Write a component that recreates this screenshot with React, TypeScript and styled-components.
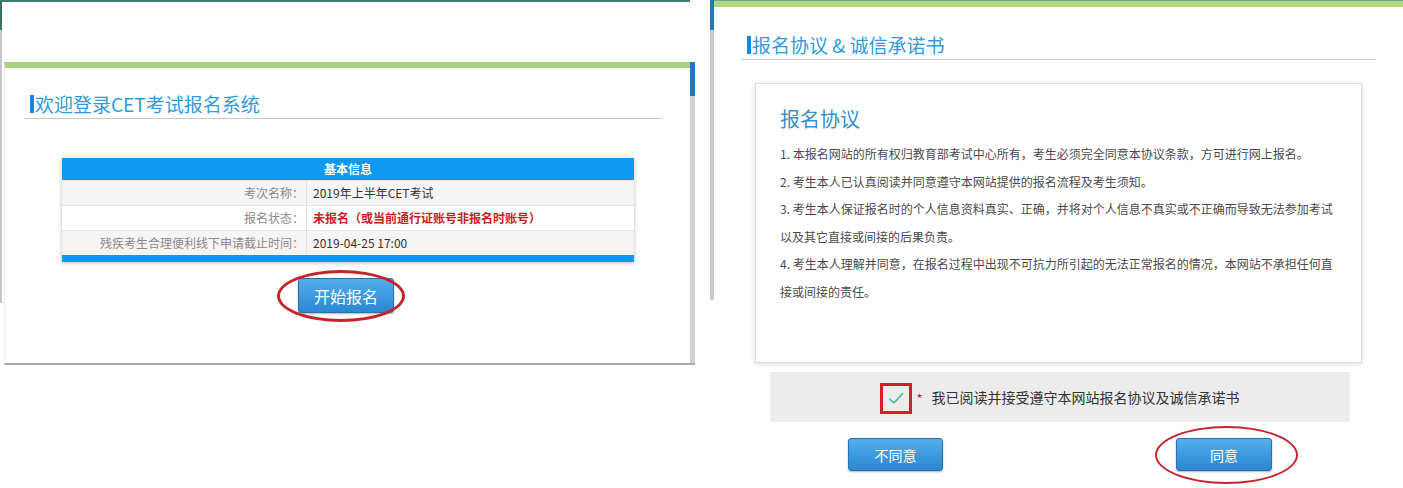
import React from "react";
import styled, { createGlobalStyle } from "styled-components";

const GlobalStyle = createGlobalStyle`
  html, body {
    margin: 0;
    padding: 0;
    background: #fff;
  }
  body {
    font-family: "Noto Sans CJK SC", "Noto Sans", "Liberation Sans", sans-serif;
    color: #333;
  }
`;

const Page = styled.div`
  display: flex;
  align-items: flex-start;
  width: 1403px;
  height: 488px;
  overflow: hidden;
`;

/* ---------- left screenshot ---------- */
const LeftShot = styled.div`
  width: 695px;
  height: 365px;
  display: flex;
  flex-direction: column;
  background: linear-gradient(to bottom, #3f6f68 0 30px, #c6c6c6 30px 303px, transparent 303px)
    left top / 2px 100% no-repeat;
`;

const TopStrip = styled.div`
  height: 60px;
  margin-right: 5px;
  border-top: 2px solid #3f7d70;
`;

const Window = styled.div`
  margin-left: 4px;
  height: 295px;
  display: flex;
  border-top: 6px solid #a8d27c;
  border-bottom: 2px solid #a9a9a9;
  border-left: 1px solid #ececec;
`;

const WindowBody = styled.div`
  flex: 1;
  padding: 0 28px 0 19px;
  display: flex;
  flex-direction: column;
`;

const Scrollbar = styled.div`
  width: 5px;
  margin-top: -6px;
  background: linear-gradient(to bottom, #1f78c0 0 34px, #cfd3d6 34px);
`;

const SectionTitle = styled.h2<{ $top: number }>`
  margin: ${(p) => p.$top}px 0 0;
  padding: 0 0 1px 6px;
  font-size: 19px;
  line-height: 26px;
  font-weight: 400;
  color: #2f9bdc;
  border-bottom: 1px solid #c9c9c9;
  display: flex;
  align-items: center;
  white-space: pre;
  &::before {
    content: "";
    width: 4px;
    height: 18px;
    margin-right: 1px;
    background: #1687e0;
  }
`;

const InfoCard = styled.div`
  width: 572px;
  margin: 39px 0 0 38px;
  box-shadow: 0 1px 4px rgba(0, 0, 0, 0.28);
  font-size: 12px;
`;

const CardHead = styled.div`
  height: 22px;
  line-height: 22px;
  text-align: center;
  color: #fff;
  font-weight: 700;
  background: #0f98ef;
`;

const CardFoot = styled.div`
  height: 7px;
  background: #0f98ef;
`;

const InfoRow = styled.div<{ $shade: boolean }>`
  display: grid;
  grid-template-columns: 245px 1fr;
  height: 24px;
  line-height: 24px;
  background: ${(p) => (p.$shade ? "#f5f5f5" : "#fff")};
  border-top: 1px solid #e3e3e3;
`;

const Label = styled.div`
  text-align: right;
  padding-right: 2px;
  color: #8a8a8a;
  border-right: 1px solid #e3e3e3;
`;

const Value = styled.div<{ $alert?: boolean }>`
  padding-left: 6px;
  color: ${(p) => (p.$alert ? "#d11a1a" : "#333")};
  font-weight: ${(p) => (p.$alert ? 700 : 400)};
`;

const ButtonRow = styled.div<{ $top: number; $left?: number; $right?: number; $spread?: boolean }>`
  display: flex;
  justify-content: ${(p) => (p.$spread ? "space-between" : "center")};
  margin-top: ${(p) => p.$top}px;
  padding: 0 ${(p) => p.$right ?? 0}px 0 ${(p) => p.$left ?? 0}px;
`;

const Marked = styled.span`
  position: relative;
  display: inline-flex;
`;

const Ellipse = styled.span<{ $t: number; $r: number; $b: number; $l: number; $w: number }>`
  position: absolute;
  top: ${(p) => -p.$t}px;
  right: ${(p) => -p.$r}px;
  bottom: ${(p) => -p.$b}px;
  left: ${(p) => -p.$l}px;
  border: ${(p) => p.$w}px solid #c3252d;
  border-radius: 50%;
  pointer-events: none;
`;

const BlueButton = styled.button<{ $w: number; $h: number; $fs: number }>`
  width: ${(p) => p.$w}px;
  height: ${(p) => p.$h}px;
  padding: 0;
  font-family: inherit;
  font-size: ${(p) => p.$fs}px;
  color: #fff;
  background: linear-gradient(to bottom, #52aee9, #2b87d2);
  border: 1px solid #2a6fae;
  border-radius: 3px;
  box-shadow: 0 1px 2px rgba(0, 0, 0, 0.3);
  cursor: pointer;
`;

/* ---------- right screenshot ---------- */
const RightShot = styled.div`
  margin-left: 15px;
  width: 693px;
  height: 488px;
  padding-left: 4px;
  box-sizing: border-box;
  background: linear-gradient(to bottom, #1f78c0 0 30px, #c9c9c9 30px 300px, transparent 300px)
    left top / 4px 100% no-repeat;
`;

const RightBody = styled.div`
  border-top: 1px solid #6aa88a;
  padding: 0 27px;
  &::before {
    content: "";
    display: block;
    height: 6px;
    margin: 0 -27px;
    background: #b3d67f;
  }
`;

const AgreementBox = styled.div`
  box-sizing: border-box;
  height: 280px;
  margin: 23px 14px 0;
  padding: 20px 24px 0;
  border: 1px solid #dedede;
  box-shadow: 0 1px 5px rgba(0, 0, 0, 0.14);
`;

const AgreementHeading = styled.h3`
  margin: 0;
  font-size: 20px;
  line-height: 30px;
  font-weight: 400;
  color: #3a8ecb;
`;

const Terms = styled.div`
  margin-top: 6px;
  font-size: 12px;
  line-height: 27.6px;
  color: #4a4a4a;
  white-space: nowrap;
`;

const AgreeStrip = styled.div`
  height: 50px;
  margin: 9px 26px 0 29px;
  background: #ececec;
  display: flex;
  align-items: center;
  justify-content: center;
  font-size: 14px;
  color: #333;
`;

const CheckFrame = styled.span`
  width: 26px;
  height: 25px;
  border: 3px solid #d2202a;
  display: flex;
  align-items: center;
  justify-content: center;
  margin-top: 2px;
`;

const Star = styled.span`
  color: #d2202a;
  font-size: 13px;
  margin: 2px 9px 0 4px;
`;

const Check = () => (
  <svg width="18" height="18" viewBox="0 0 18 18" fill="none">
    <polyline points="2,9.5 7,14 16,4" stroke="#4fb59a" strokeWidth="1.6" strokeLinejoin="round" />
  </svg>
);

const terms = [
  "1. 本报名网站的所有权归教育部考试中心所有，考生必须完全同意本协议条款，方可进行网上报名。",
  "2. 考生本人已认真阅读并同意遵守本网站提供的报名流程及考生须知。",
  "3. 考生本人保证报名时的个人信息资料真实、正确，并将对个人信息不真实或不正确而导致无法参加考试",
  "以及其它直接或间接的后果负责。",
  "4. 考生本人理解并同意，在报名过程中出现不可抗力所引起的无法正常报名的情况，本网站不承担任何直",
  "接或间接的责任。",
];

export default function App() {
  return (
    <>
      <GlobalStyle />
      <Page>
        <LeftShot>
          <TopStrip />
          <Window>
            <WindowBody>
              <SectionTitle $top={23}>欢迎登录CET考试报名系统</SectionTitle>
              <InfoCard>
                <CardHead>基本信息</CardHead>
                <InfoRow $shade>
                  <Label>考次名称：</Label>
                  <Value>2019年上半年CET考试</Value>
                </InfoRow>
                <InfoRow $shade={false}>
                  <Label>报名状态：</Label>
                  <Value $alert>未报名（或当前通行证账号非报名时账号）</Value>
                </InfoRow>
                <InfoRow $shade>
                  <Label>残疾考生合理便利线下申请截止时间：</Label>
                  <Value>2019-04-25 17:00</Value>
                </InfoRow>
                <CardFoot />
              </InfoCard>
              <ButtonRow $top={16} $left={6}>
                <Marked>
                  <BlueButton $w={96} $h={35} $fs={16}>开始报名</BlueButton>
                  <Ellipse $t={8} $r={11} $b={9} $l={21} $w={3} />
                </Marked>
              </ButtonRow>
            </WindowBody>
            <Scrollbar />
          </Window>
        </LeftShot>

        <RightShot>
          <RightBody>
            <SectionTitle $top={25}>报名协议 &amp; 诚信承诺书</SectionTitle>
            <AgreementBox>
              <AgreementHeading>报名协议</AgreementHeading>
              <Terms>
                {terms.map((t) => (
                  <div key={t}>{t}</div>
                ))}
              </Terms>
            </AgreementBox>
            <AgreeStrip>
              <CheckFrame>
                <Check />
              </CheckFrame>
              <Star>*</Star>
              我已阅读并接受遵守本网站报名协议及诚信承诺书
            </AgreeStrip>
            <ButtonRow $top={16} $left={107} $right={104} $spread>
              <BlueButton $w={95} $h={33} $fs={14}>不同意</BlueButton>
              <Marked>
                <BlueButton $w={96} $h={33} $fs={14}>同意</BlueButton>
                <Ellipse $t={12} $r={26} $b={13} $l={21} $w={2} />
              </Marked>
            </ButtonRow>
          </RightBody>
        </RightShot>
      </Page>
    </>
  );
}
